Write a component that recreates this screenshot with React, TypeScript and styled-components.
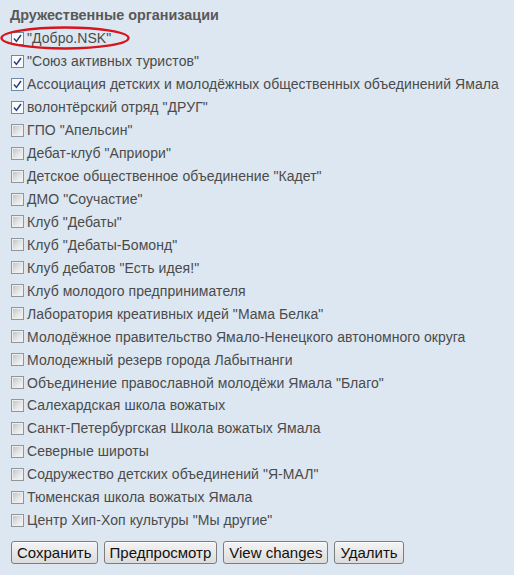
import React from "react";
import styled, {createGlobalStyle} from "styled-components";

const GlobalStyle = createGlobalStyle`
  html, body {
    margin: 0;
    padding: 0;
    background: #dce7f1;
  }
  body {
    font-family: "Liberation Sans", Arial, sans-serif;
  }
`;

const Page = styled.div`
  width: 514px;
  height: 575px;
  box-sizing: border-box;
  padding: 5px 0 0 10px;
  background: #dce7f1;
`;

const Title = styled.div`
  font-size: 14.4px;
  font-weight: bold;
  color: #585858;
  line-height: 20px;
  margin-bottom: 2px;
`;

const List = styled.div`
  display: flex;
  flex-direction: column;
`;

const Row = styled.label`
  position: relative;
  display: flex;
  align-items: center;
  height: 22.95px;
  gap: 3px;
  font-size: 14px;
  letter-spacing: 0.06px;
  color: #4b4b4b;
  white-space: nowrap;
`;

const Box = styled.span<{checked: boolean}>`
  width: 13px;
  height: 13px;
  margin-left: 1px;
  flex: none;
  box-sizing: border-box;
  display: flex;
  align-items: center;
  justify-content: center;
  border: 1px solid ${({checked}) => (checked ? "#6f8aa6" : "#8f969d")};
  background: ${({checked}) =>
    checked ? "#fbfbfb" : "linear-gradient(135deg, #bcc0c4 0%, #e3e5e6 55%, #fafafa 100%)"};
  box-shadow: ${({checked}) => (checked ? "none" : "inset 0 0 0 1px #eeeeee")};
`;

const Highlight = styled.svg`
  position: absolute;
  left: -10px;
  top: -2px;
  pointer-events: none;
`;

const Buttons = styled.div`
  display: flex;
  gap: 6px;
  margin-top: 9px;
  margin-left: 1px;
`;

const Button = styled.button`
  height: 23px;
  padding: 0 5px;
  font-family: "Liberation Sans", Arial, sans-serif;
  font-size: 15px;
  color: #111;
  border: 1px solid #7d7d7d;
  border-radius: 3px;
  background: linear-gradient(#f4f4f4, #dcdcdc);
  box-shadow: inset 0 1px 0 #ffffff;
`;

const Check = () => (
  <svg width="11" height="11" viewBox="0 0 11 11">
    <path d="M2 5.6 L4.4 8.4 L9 2" fill="none" stroke="#243f8a" strokeWidth="1.5" />
  </svg>
);

const items: [string, boolean][] = [
  ['"Добро.NSK"', true],
  ['"Союз активных туристов"', true],
  ["Ассоциация детских и молодёжных общественных объединений Ямала", true],
  ['волонтёрский отряд "ДРУГ"', true],
  ['ГПО "Апельсин"', false],
  ['Дебат-клуб "Априори"', false],
  ['Детское общественное объединение "Кадет"', false],
  ['ДМО "Соучастие"', false],
  ['Клуб "Дебаты"', false],
  ['Клуб "Дебаты-Бомонд"', false],
  ['Клуб дебатов "Есть идея!"', false],
  ["Клуб молодого предпринимателя", false],
  ['Лаборатория креативных идей "Мама Белка"', false],
  ["Молодёжное правительство Ямало-Ненецкого автономного округа", false],
  ["Молодежный резерв города Лабытнанги", false],
  ['Объединение православной молодёжи Ямала "Благо"', false],
  ["Салехардская школа вожатых", false],
  ["Санкт-Петербургская Школа вожатых Ямала", false],
  ["Северные широты", false],
  ['Содружество детских объединений "Я-МАЛ"', false],
  ["Тюменская школа вожатых Ямала", false],
  ['Центр Хип-Хоп культуры "Мы другие"', false],
];

export default function App() {
  return (
    <>
      <GlobalStyle />
      <Page>
        <Title>Дружественные организации</Title>
        <List>
          {items.map(([name, checked], i) => (
            <Row key={name}>
              <Box checked={checked}>{checked && <Check />}</Box>
              {name}
              {i === 0 && (
                <Highlight width="132" height="26" viewBox="0 0 132 26">
                  <ellipse cx="65" cy="13" rx="63.5" ry="10.5" fill="none" stroke="#d8141c" strokeWidth="2.4" />
                </Highlight>
              )}
            </Row>
          ))}
        </List>
        <Buttons>
          <Button>Сохранить</Button>
          <Button>Предпросмотр</Button>
          <Button>View changes</Button>
          <Button>Удалить</Button>
        </Buttons>
      </Page>
    </>
  );
}
